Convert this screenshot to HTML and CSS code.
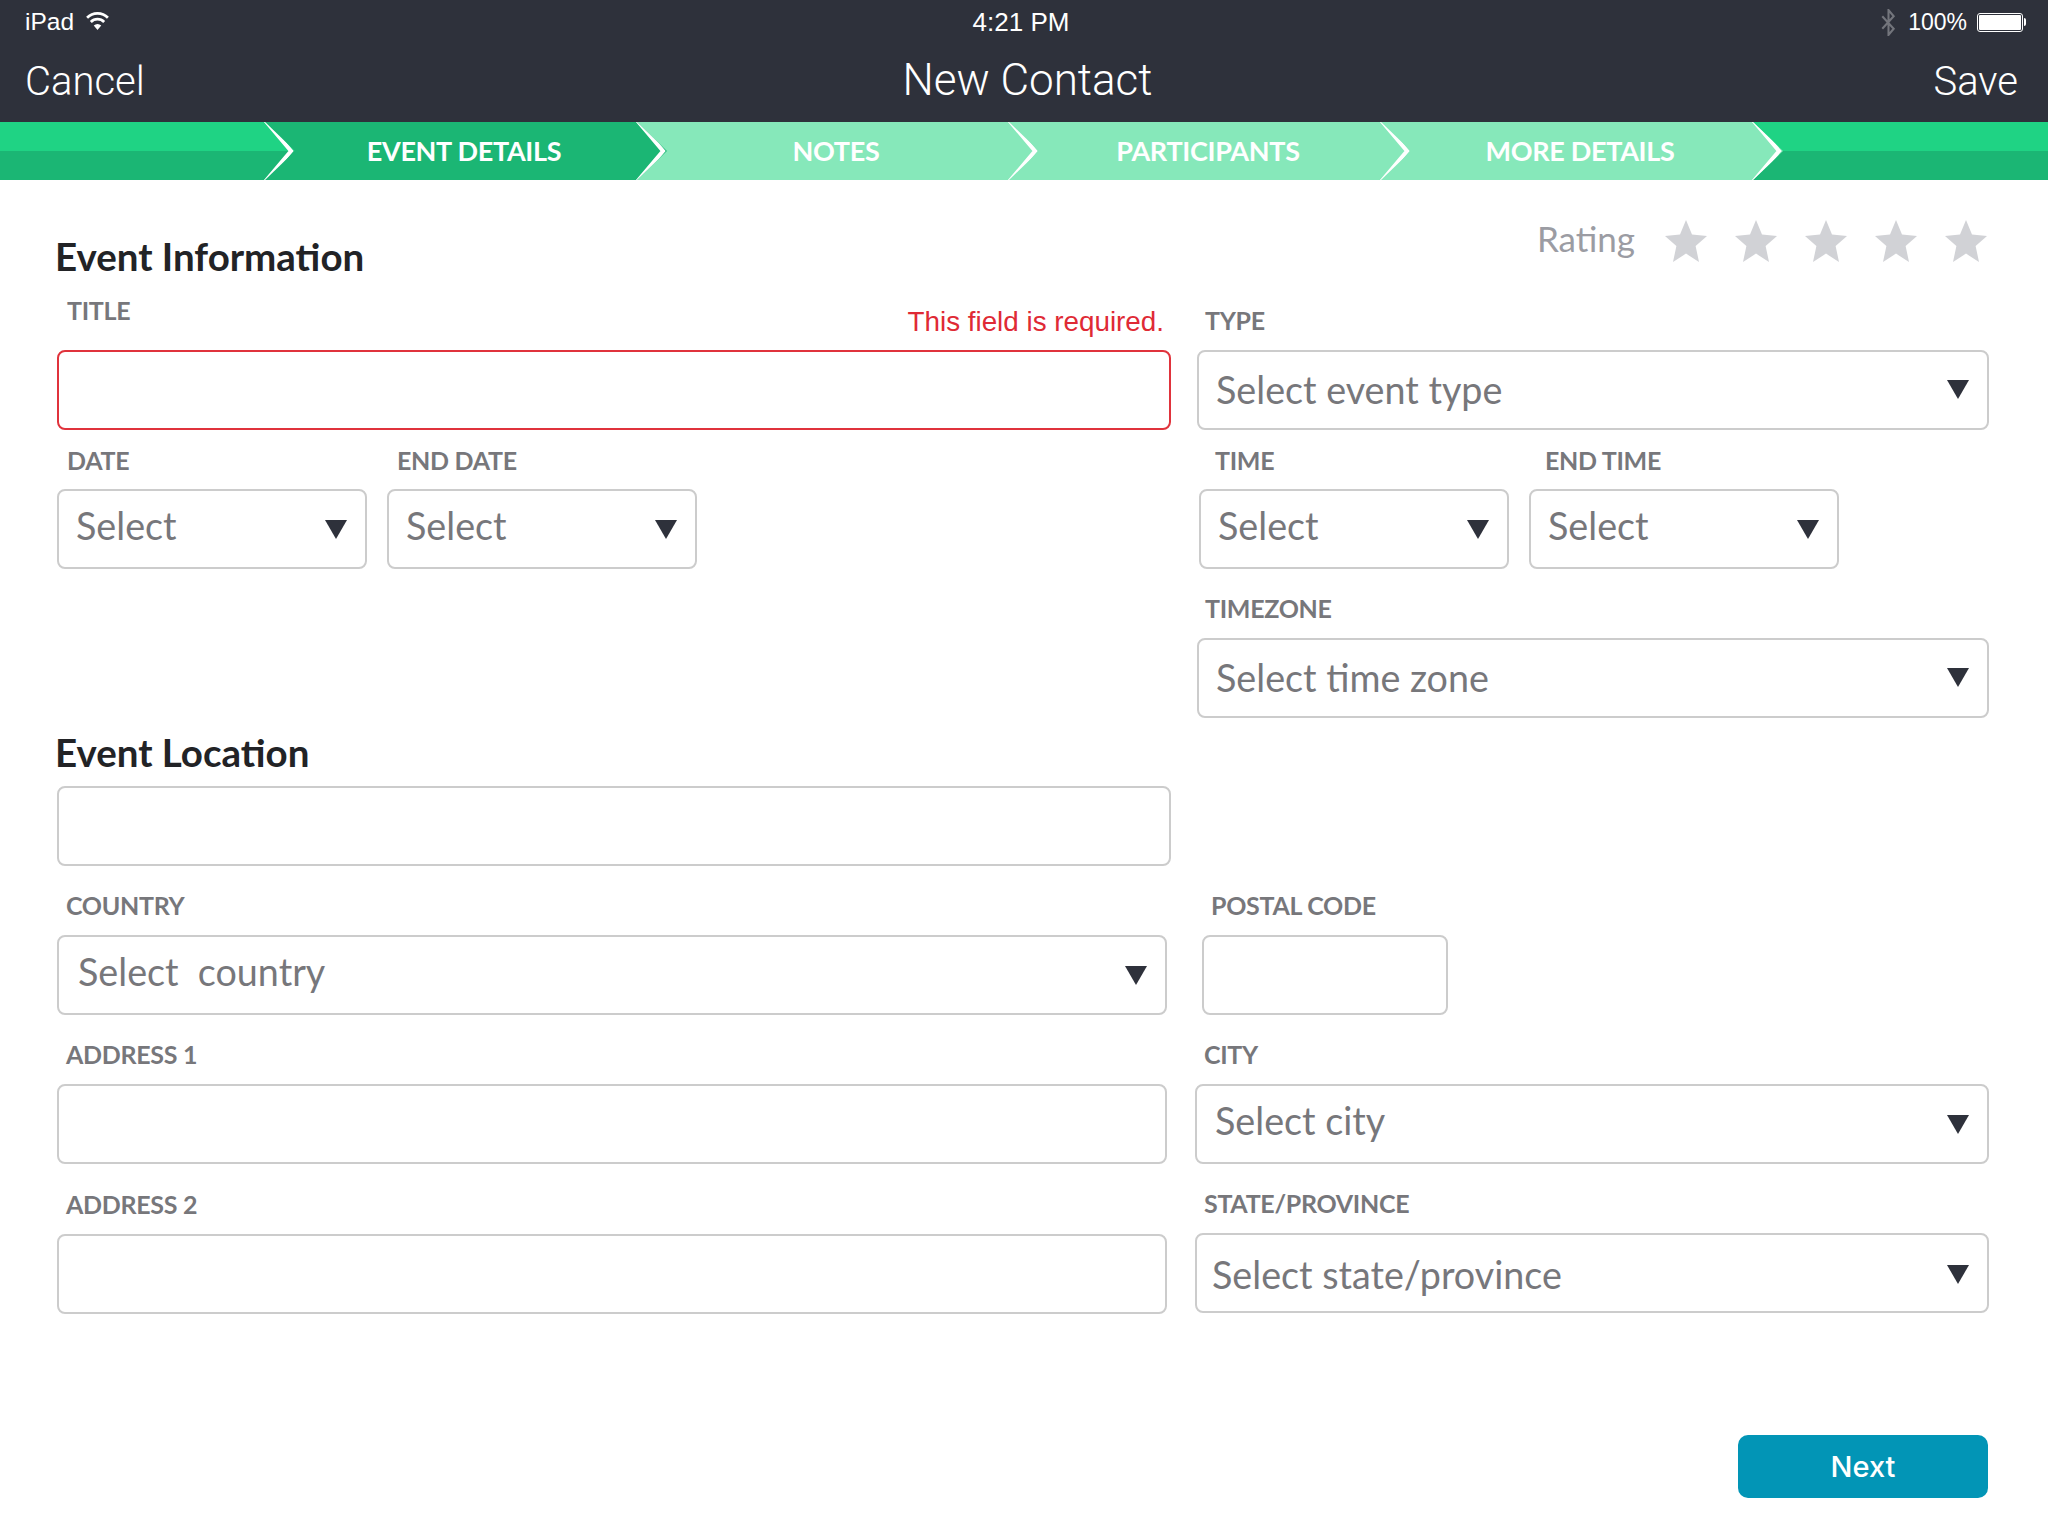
FILE: index.html
```html
<html>
<head>
	<link rel="stylesheet" href="styles.css">
</head>
<body>
	<div id="header">
		<div class="status">
			<div class="status_left">
				iPad
				<svg class="wifi" viewBox="0 0 24 18" width="25" height="19">
					<path d="M12 18L8.4 13.8A5.2 5.2 0 0 1 15.6 13.8Z" fill="#fff"/>
					<path d="M5.6 10.4A9 9 0 0 1 18.4 10.4" fill="none" stroke="#fff" stroke-width="2.6"/>
					<path d="M2 6.4A14 14 0 0 1 22 6.4" fill="none" stroke="#fff" stroke-width="2.6"/>
				</svg>
			</div>
			<div class="status_mid">4:21 PM</div>
			<div class="status_right">
				<svg class="bluetooth" viewBox="0 0 14 26" width="15" height="27">
					<path d="M1 7L12 19L7 25V1L12 7L1 19" fill="none" stroke="#73757c" stroke-width="2"/>
				</svg>
				<span>100%</span>
				<div class="battery"><div class="battery_fill"></div></div>
			</div>
		</div>
		<div class="nav">
			<div class="nav_left">Cancel</div>
			<div class="nav_title">New Contact</div>
			<div class="nav_right">Save</div>
		</div>
	</div>

	<div id="tabs">
		<div class="step stub">
			<svg class="chevron" viewBox="0 0 32 58" width="32" height="58"><polyline points="1,-3 28,29 1,61"/></svg>
		</div>
		<div class="step active">EVENT DETAILS
			<svg class="chevron" viewBox="0 0 32 58" width="32" height="58"><polyline points="1,-3 28,29 1,61"/></svg>
		</div>
		<div class="step">NOTES
			<svg class="chevron" viewBox="0 0 32 58" width="32" height="58"><polyline points="1,-3 28,29 1,61"/></svg>
		</div>
		<div class="step">PARTICIPANTS
			<svg class="chevron" viewBox="0 0 32 58" width="32" height="58"><polyline points="1,-3 28,29 1,61"/></svg>
		</div>
		<div class="step">MORE DETAILS
			<svg class="chevron" viewBox="0 0 32 58" width="32" height="58"><polyline points="1,-3 28,29 1,61"/></svg>
		</div>
		<div class="tail"></div>
	</div>

	<div id="form">
		<div class="top">
			<div class="col_left">
				<h2 class="first">Event Information</h2>
				<div class="title_head">
					<label class="title_label">TITLE</label>
					<span class="error">This field is required.</span>
				</div>
				<input class="box invalid" type="text">
				<div class="pair">
					<div class="narrow">
						<label class="short">DATE</label>
						<div class="box select raised"><span>Select</span></div>
					</div>
					<div class="narrow">
						<label class="short">END DATE</label>
						<div class="box select raised"><span>Select</span></div>
					</div>
				</div>
			</div>
			<div class="col_right">
				<div class="rating">
					<span>Rating</span>
					<div class="stars">
						<svg viewBox="0 0 42 42" width="42" height="42"><polygon points="21,0 27,14.6 42,16 30.6,26 34,42 21,33.6 8,42 11.4,26 0,16 15,14.6"/></svg>
						<svg viewBox="0 0 42 42" width="42" height="42"><polygon points="21,0 27,14.6 42,16 30.6,26 34,42 21,33.6 8,42 11.4,26 0,16 15,14.6"/></svg>
						<svg viewBox="0 0 42 42" width="42" height="42"><polygon points="21,0 27,14.6 42,16 30.6,26 34,42 21,33.6 8,42 11.4,26 0,16 15,14.6"/></svg>
						<svg viewBox="0 0 42 42" width="42" height="42"><polygon points="21,0 27,14.6 42,16 30.6,26 34,42 21,33.6 8,42 11.4,26 0,16 15,14.6"/></svg>
						<svg viewBox="0 0 42 42" width="42" height="42"><polygon points="21,0 27,14.6 42,16 30.6,26 34,42 21,33.6 8,42 11.4,26 0,16 15,14.6"/></svg>
					</div>
				</div>
				<label class="type_label">TYPE</label>
				<div class="box select"><span>Select event type</span></div>
				<div class="pair time_pair">
					<div class="narrow">
						<label class="short time_label">TIME</label>
						<div class="box select raised"><span>Select</span></div>
					</div>
					<div class="narrow">
						<label class="short time_label">END TIME</label>
						<div class="box select raised"><span>Select</span></div>
					</div>
				</div>
				<label class="tz_label">TIMEZONE</label>
				<div class="box select"><span>Select time zone</span></div>
			</div>
		</div>

		<h2 class="second">Event Location</h2>
		<input class="box location" type="text">

		<div class="row row_postal">
			<div>
				<label>COUNTRY</label>
				<div class="box select raised country"><span>Select&nbsp; country</span></div>
			</div>
			<div class="postal">
				<label>POSTAL CODE</label>
				<input class="box" type="text">
			</div>
		</div>
		<div class="row">
			<div>
				<label>ADDRESS 1</label>
				<input class="box" type="text">
			</div>
			<div>
				<label>CITY</label>
				<div class="box select raised city"><span>Select city</span></div>
			</div>
		</div>
		<div class="row">
			<div>
				<label class="tall">ADDRESS 2</label>
				<input class="box" type="text">
			</div>
			<div>
				<label>STATE/PROVINCE</label>
				<div class="box select state"><span>Select state/province</span></div>
			</div>
		</div>

		<div class="actions">
			<a class="next" href="#">Next</a>
		</div>
	</div>
</body>
</html>
```

FILE: styles.css
```css
body {
	font-family: "Lato", "Noto Sans", sans-serif;
	margin: 0px;
	background: #ffffff;
	color: #77777b;
}
#header {
	background: #2e313b;
	color: #ffffff;
	height: 122px;
	font-family: "Liberation Sans", sans-serif;
}
.status {
	display: grid;
	grid-template-columns: 1fr auto 1fr;
	align-items: center;
	height: 44px;
	padding: 0px 23px 0px 25px;
	font-size: 24px;
}
.status_left {
	display: flex;
	align-items: center;
	gap: 11px;
	font-size: 24.5px;
}
.wifi {
	margin-top: -3px;
}
.status_mid {
	font-size: 26px;
	margin-left: -8px;
}
.status_right {
	display: flex;
	align-items: center;
	justify-content: flex-end;
	gap: 10px;
	font-size: 23px;
}
.bluetooth {
	margin-right: 2px;
}
.battery {
	position: relative;
	box-sizing: border-box;
	width: 46px;
	height: 19px;
	border: solid 1px #ffffff;
	border-radius: 3px;
	padding: 1px;
	margin-right: 2px;
}
.battery:after {
	content: "";
	position: absolute;
	top: 4px;
	right: -4px;
	width: 2px;
	height: 8px;
	background: #ffffff;
	border-radius: 0px 2px 2px 0px;
}
.battery_fill {
	background: #ffffff;
	height: 100%;
	border-radius: 1px;
}
.nav {
	display: grid;
	grid-template-columns: 1fr auto 1fr;
	align-items: center;
	height: 74px;
	padding: 0px 30px 2px 25px;
	font-family: "Roboto", sans-serif;
	font-weight: 300;
	font-size: 40px;
}
.nav_title {
	font-size: 44px;
	margin-left: 12px;
	margin-top: -3px;
}
.nav_right {
	text-align: right;
}
#tabs {
	display: flex;
	height: 58px;
	overflow: hidden;
	font-size: 27px;
	font-weight: 700;
	letter-spacing: -0.3px;
	color: #ffffff;
}
.step {
	position: relative;
	flex: 0 0 402px;
	box-sizing: border-box;
	padding-right: 4px;
	margin-right: -30px;
	height: 58px;
	line-height: 58px;
	text-align: center;
	background: #86e8ba;
	clip-path: polygon(0 0, calc(100% - 30px) 0, 100% 50%, calc(100% - 30px) 100%, 0 100%);
}
.step:nth-child(1) { z-index: 5; }
.step:nth-child(2) { z-index: 4; }
.step:nth-child(3) { z-index: 3; }
.step:nth-child(4) { z-index: 2; }
.step:nth-child(5) { z-index: 1; }
.stub {
	flex-basis: 295px;
	background: linear-gradient(#1fd384 50%, #1bb674 50%);
}
.active {
	background: #1bb674;
}
.tail {
	flex: 1;
	background: linear-gradient(#1fd384 50%, #1bb674 50%);
}
.chevron {
	position: absolute;
	top: 0px;
	right: 0px;
}
.chevron polyline {
	fill: none;
	stroke: #ffffff;
	stroke-width: 4;
}
#form {
	padding: 0px 59px 0px 57px;
}
.top {
	display: flex;
	gap: 26px;
}
.col_left {
	flex: 0 0 1114px;
}
.col_right {
	flex: 1;
}
h2 {
	margin: 0px;
	height: 40px;
	line-height: 40px;
	font-size: 38.5px;
	font-weight: 700;
	color: #222326;
	margin-left: -2px;
}
h2.first {
	margin-top: 56px;
	margin-bottom: 1px;
}
h2.second {
	margin-top: 14px;
	margin-bottom: 14px;
}
label {
	display: block;
	box-sizing: border-box;
	height: 69px;
	padding: 27px 0px 0px 9px;
	line-height: 24px;
	font-size: 25px;
	font-weight: 700;
	letter-spacing: -0.3px;
	color: #77777b;
}
.tall {
	height: 70px;
	padding-top: 28px;
}
.title_head {
	display: flex;
	justify-content: space-between;
	height: 73px;
}
.title_label {
	height: 73px;
	padding: 21px 0px 0px 10px;
}
.error {
	margin-top: 30px;
	margin-right: 7px;
	line-height: 30px;
	font-family: "Liberation Sans", sans-serif;
	font-size: 27.8px;
	color: #df2a35;
}
.box {
	display: block;
	box-sizing: border-box;
	width: 100%;
	height: 80px;
	margin: 0px;
	border: solid 2px #cccccc;
	border-radius: 8px;
	background: #ffffff;
	outline: none;
}
.invalid {
	border-color: #e0333c;
}
.select {
	display: flex;
	align-items: center;
	justify-content: space-between;
	padding: 0px 18px 2px 17px;
	font-size: 37.7px;
	color: #77777b;
}
.raised {
	padding-bottom: 8px;
}
.raised:after {
	margin-top: 8px;
}
.select:after {
	content: "";
	border-left: solid 11px transparent;
	border-right: solid 11px transparent;
	border-top: solid 19px #2e313b;
}
.country {
	padding-left: 19px;
}
.city {
	padding-left: 18px;
}
.pair {
	display: flex;
	gap: 20px;
}
.narrow {
	flex: 0 0 310px;
}
.short {
	height: 59px;
	padding-top: 18px;
	padding-left: 10px;
}
.time_pair {
	padding-left: 2px;
}
.time_label {
	padding-left: 16px;
}
.rating {
	display: flex;
	justify-content: flex-end;
	align-items: center;
	gap: 30px;
	height: 42px;
	margin-top: 40px;
	margin-right: 2px;
	margin-bottom: 2px;
	font-size: 35px;
	color: #9b9ca3;
}
.rating span {
	margin-top: -7px;
}
.stars {
	display: flex;
	gap: 28px;
}
.stars svg {
	fill: #d1d2d6;
}
.type_label {
	height: 86px;
	padding-top: 44px;
	padding-left: 8px;
}
.tz_label {
	padding-top: 27px;
	padding-left: 8px;
}
.location {
	width: 1114px;
}
.row {
	display: grid;
	grid-template-columns: 1110px 794px;
	gap: 28px;
}
.postal {
	padding-left: 7px;
	width: 246px;
}
.state {
	padding: 2px 18px 0px 15px;
}
.actions {
	display: flex;
	justify-content: flex-end;
	margin-top: 121px;
	margin-right: 1px;
}
.next {
	display: block;
	width: 250px;
	height: 63px;
	line-height: 63px;
	border-radius: 10px;
	background: #0295b6;
	color: #ffffff;
	text-align: center;
	text-decoration: none;
	font-family: "Inter", sans-serif;
	font-weight: 500;
	font-size: 29px;
}
```
